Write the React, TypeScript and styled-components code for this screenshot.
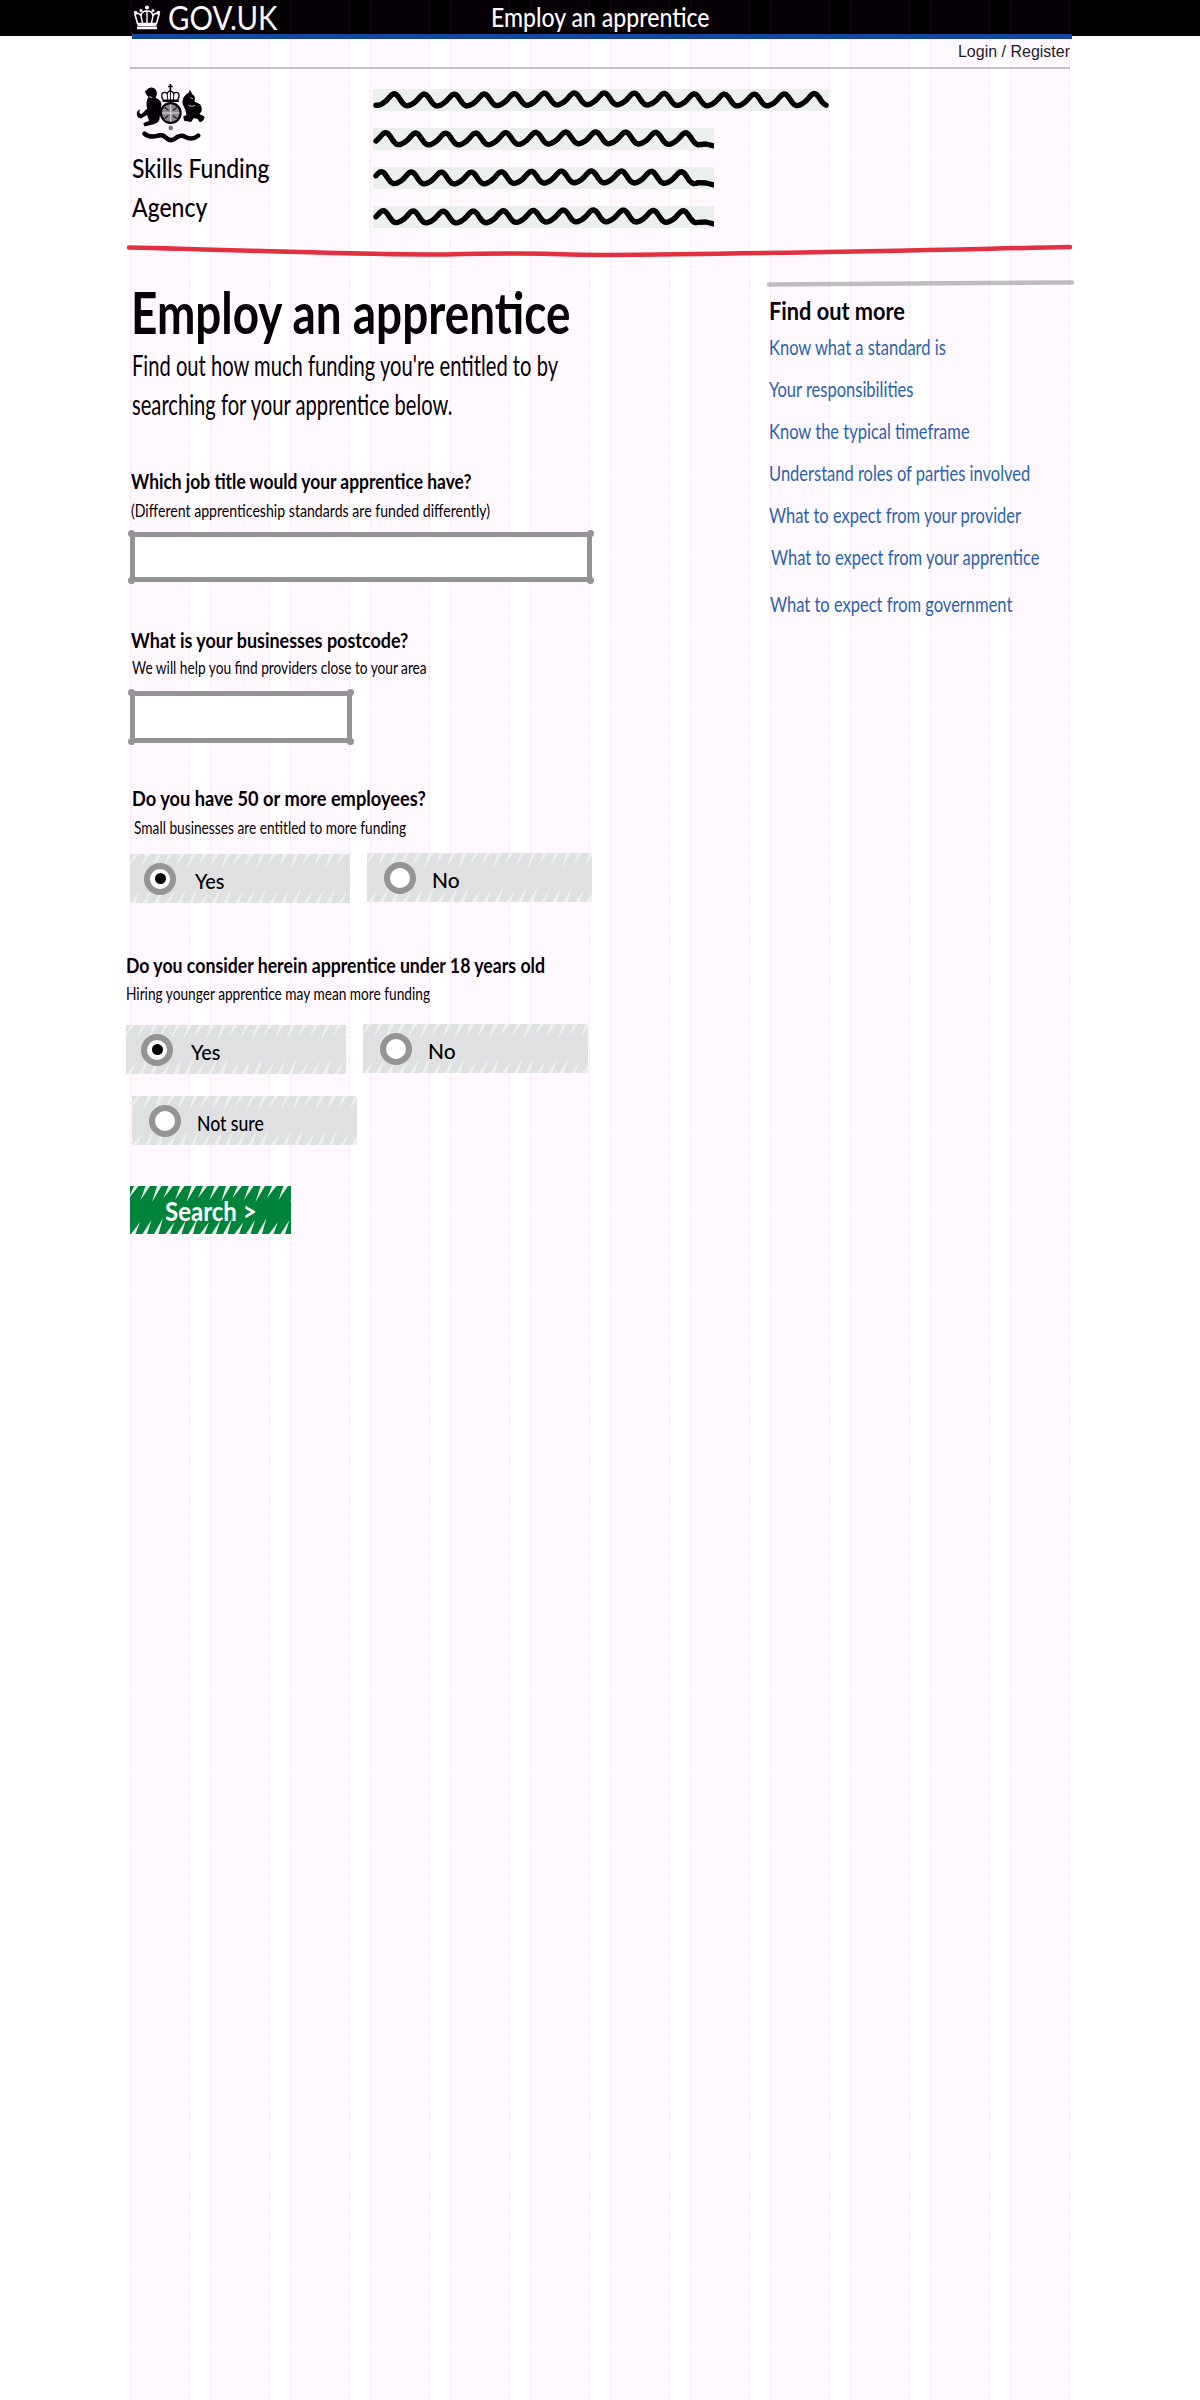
import React from 'react';
import styled, { createGlobalStyle, css } from 'styled-components';

const GlobalStyle = createGlobalStyle`
  html, body {
    margin: 0;
    background: #fff;
  }
  #root {
    position: relative;
    min-height: 2400px;
    font-family: Lato, "Open Sans", sans-serif;
    color: #000;
  }
`;

// the reference face is much narrower than anything installed
const squeeze = (k: number) => css`
  white-space: nowrap;
  transform: scaleX(${k});
  transform-origin: left center;
`;

const GridOverlay = styled.div`
  position: absolute;
  top: 0;
  left: 130px;
  width: 940px;
  height: 2400px;
  display: flex;
  gap: 20px;
  pointer-events: none;
`;

const GridColumn = styled.div`
  flex: 1;
  box-sizing: border-box;
  background: rgba(255, 0, 255, 0.028);
  border-left: 1px dashed rgba(255, 60, 120, 0.12);
  border-right: 1px dashed rgba(255, 60, 120, 0.12);
`;

const TopBar = styled.header`
  height: 39px;
  background: linear-gradient(#000 0 36px, transparent 36px);
  color: #fff;
`;

const TopInner = styled.div`
  box-sizing: border-box;
  width: 940px;
  height: 39px;
  margin-left: 132px;
  border-bottom: 5px solid #104a9a;
  display: flex;
  align-items: flex-start;
`;

const Brand = styled.div`
  width: 360px;
  height: 34px;
  padding-left: 1px;
  box-sizing: border-box;
  display: flex;
  align-items: center;
  gap: 7px;
`;

const BrandName = styled.span`
  font-size: 33px;
  line-height: 34px;
  ${squeeze(0.89)}
`;

const ServiceName = styled.div`
  margin-left: -1px;
  font-size: 26.5px;
  font-weight: 500;
  line-height: 34px;
  ${squeeze(0.87)}
`;

const Page = styled.div`
  width: 940px;
  margin-left: 130px;
`;

const LoginRow = styled.div`
  height: 28px;
  border-bottom: 2px solid #c4c4c6;
  text-align: right;
  font-family: "Liberation Sans", Arial, sans-serif;
  font-size: 16px;
  line-height: 26px;
  color: #1c1c1c;
`;

const OrgRow = styled.div`
  display: flex;
  height: 174px;
`;

const OrgBlock = styled.div`
  width: 243px;
  padding: 13px 0 0 2px;
  box-sizing: border-box;
`;

const CrestSvg = styled.svg`
  display: block;
  margin-left: 4px;
`;

const OrgName = styled.div`
  margin-top: 3px;
  font-size: 27px;
  font-weight: 500;
  line-height: 39px;
  ${squeeze(0.85)}
`;

const SquiggleList = styled.div`
  padding-top: 20px;
  display: flex;
  flex-direction: column;
  gap: 17px;
`;

const SquiggleSvg = styled.svg`
  position: relative;
  z-index: 1;
  display: block;
  background: #ebf0ef;
`;

const RuleSvg = styled.svg`
  display: block;
  margin-left: -4px;
`;

const MainRow = styled.div`
  display: flex;
`;

const LeftCol = styled.main`
  width: 637px;
  flex: none;
`;

const Heading = styled.h1`
  margin: 20px 0 0 1px;
  font-size: 57px;
  font-weight: 700;
  line-height: 66px;
  ${squeeze(0.805)}
`;

const Lead = styled.p`
  margin: 1px 0 0 2px;
  font-size: 28px;
  line-height: 39px;
  ${squeeze(0.72)}
`;

const Label = styled.div<{ $top: number; $left: number; $k: number }>`
  margin: ${p => p.$top}px 0 0 ${p => p.$left}px;
  font-size: 21.5px;
  font-weight: 700;
  line-height: 26px;
  ${p => squeeze(p.$k)}
`;

const Hint = styled.div<{ $top: number; $left: number; $k: number }>`
  margin: ${p => p.$top}px 0 0 ${p => p.$left}px;
  font-size: 17.5px;
  line-height: 23px;
  ${p => squeeze(p.$k)}
`;

const InputFrame = styled.div<{ $width: number; $height: number; $top: number }>`
  position: relative;
  z-index: 1;
  width: ${p => p.$width}px;
  height: ${p => p.$height}px;
  margin-top: ${p => p.$top}px;
`;

const TextInput = styled.input`
  display: block;
  box-sizing: border-box;
  width: 100%;
  height: 100%;
  padding: 0 8px;
  border: 5px solid #949494;
  border-radius: 0;
  background: #fff;
  outline: none;
`;

const Nub = styled.span<{ $right?: boolean; $bottom?: boolean }>`
  position: absolute;
  ${p => (p.$right ? 'right: -2px;' : 'left: -2px;')}
  ${p => (p.$bottom ? 'bottom: -2px;' : 'top: -2px;')}
  width: 7px;
  height: 7px;
  border-radius: 50%;
  background: #949494;
`;

const OptionRow = styled.div<{ $top: number; $left: number }>`
  display: flex;
  align-items: flex-start;
  gap: 17px;
  margin: ${p => p.$top}px 0 0 ${p => p.$left}px;
`;

const Option = styled.label<{ $width: number; $pad: number; $gap: number; $lift: number }>`
  position: relative;
  z-index: 1;
  box-sizing: border-box;
  display: flex;
  align-items: center;
  gap: ${p => p.$gap}px;
  width: ${p => p.$width}px;
  height: 49px;
  margin-top: ${p => p.$lift}px;
  padding-left: ${p => p.$pad}px;
  font-size: 22px;
  font-weight: 500;
`;

const HatchSvg = styled.svg`
  position: absolute;
  top: 0;
  left: 0;
`;

const Radio = styled.span<{ $on: boolean }>`
  position: relative;
  box-sizing: border-box;
  display: flex;
  align-items: center;
  justify-content: center;
  width: 32px;
  height: 32px;
  border: 6px solid #949494;
  border-radius: 50%;
  background: #fff;

  &::after {
    content: '';
    display: ${p => (p.$on ? 'block' : 'none')};
    width: 11px;
    height: 11px;
    border-radius: 50%;
    background: #000;
  }
`;

const OptionText = styled.span<{ $k: number }>`
  position: relative;
  padding-top: 4px;
  ${p => squeeze(p.$k)}
`;

const SearchButton = styled.button`
  position: relative;
  z-index: 1;
  display: block;
  width: 161px;
  height: 48px;
  margin-top: 41px;
  padding: 0 0 0 35px;
  border: 0;
  background: none;
  text-align: left;
  color: #fff;
  font-family: Lato, sans-serif;
  font-size: 27px;
  font-weight: 700;
`;

const SearchText = styled.span`
  position: relative;
  display: inline-block;
  ${squeeze(0.89)}
`;

const Sidebar = styled.aside`
  width: 307px;
  flex: none;
`;

const SideRule = styled.svg`
  display: block;
  margin-top: 20px;
`;

const SideTitle = styled.h2`
  margin: 8px 0 1px 2px;
  font-size: 25px;
  font-weight: 700;
  line-height: 30px;
  ${squeeze(0.87)}
`;

const LinkList = styled.ul`
  margin: 0;
  padding: 0;
  list-style: none;
`;

const LinkItem = styled.li<{ $left: number; $top: number }>`
  margin: ${p => p.$top}px 0 0 ${p => p.$left}px;
`;

const SideLink = styled.a`
  display: block;
  color: #1f66ab;
  font-size: 22px;
  line-height: 42px;
  text-decoration: none;
  ${squeeze(0.75)}
`;

const wavePath = (width: number, phase: number, tail: boolean) => {
  const points: string[] = [];
  for (let x = 3; x <= width - (tail ? 16 : 3); x += 2) {
    const t = (x / 30) * Math.PI * 2 + phase;
    const y = 11 + 5.8 * Math.sin(t) + 0.9 * Math.sin(2 * t + 0.8) + 0.6 * Math.sin(x / 47);
    points.push(`${x},${y.toFixed(1)}`);
  }
  if (tail) points.push(`${width - 8},16`, `${width},18`);
  return `M${points.join(' L')}`;
};

const Squiggle = ({ width, phase, tail }: { width: number; phase: number; tail: boolean }) => (
  <SquiggleSvg width={width} height={22} viewBox={`0 0 ${width} 22`}>
    <path d={wavePath(width, phase, tail)} fill="none" stroke="#000" strokeWidth={5.4} strokeLinecap="round" strokeLinejoin="round" />
  </SquiggleSvg>
);

// scribbled fill: solid colour with little tapered gaps cut in from top and bottom
const Hatch = ({ width, height, fill, gap }: { width: number; height: number; fill: string; gap: string }) => {
  const teeth: string[] = [];
  for (let x = 4, i = 0; x < width + 10; x += 11.5, i++) {
    const d = 12 + (i % 3) * 2;
    teeth.push(`M${x} 0 L${x + 4.500} 0 L${x - 5} ${d} Z`);
    teeth.push(`M${x - 3} ${height} L${x + 1.500} ${height} L${x + 6} ${height - d} Z`);
  }
  return (
    <HatchSvg width={width} height={height} viewBox={`0 0 ${width} ${height}`}>
      <rect width={width} height={height} fill={fill} />
      <path d={teeth.join(' ')} fill={gap} />
    </HatchSvg>
  );
};

const CrownIcon = () => (
  <svg width="28" height="27" viewBox="0 0 28 27" fill="none" stroke="#fff">
    <path d="M4 24h20M4.5 21h19" strokeWidth="2.4" />
    <path d="M4.5 19.5 2 10.5c2.5-2 5-1 6 1.5 .2-3 1.8-5 6-5s5.800 2 6 5c1-2.500 3.500-3.500 6-1.500L23.500 19.500Z" strokeWidth="1.600" />
    <path d="M8 12l1.500 7M14 7v12M20 12l-1.500 7" strokeWidth="1.400" />
    <circle cx="14" cy="3.500" r="2" fill="#fff" stroke="none" />
    <circle cx="2.500" cy="8.500" r="1.700" fill="#fff" stroke="none" />
    <circle cx="25.500" cy="8.500" r="1.700" fill="#fff" stroke="none" />
    <circle cx="8" cy="6.500" r="1.500" fill="#fff" stroke="none" />
    <circle cx="20" cy="6.500" r="1.500" fill="#fff" stroke="none" />
  </svg>
);

// royal arms, drawn roughly at crop scale
const Crest = () => (
  <CrestSvg width="73" height="63" viewBox="30 36 225 195">
    <path d="M62 62c6-12 24-12 30 0 4 8 2 16-2 22 8 6 20 10 18 24l-6 44c-2 10-14 14-24 16l-22 6-4-10 18-8-6-18-18 10c-8 2-14-6-14-14 0-6 4-12 10-14-4 8-2 16 6 14l16-16c-4-12-2-26 4-36-6-6-12-14-10-20z" fill="#000" />
    <path d="M62 118c-6 6-12 8-16 4M70 82l10 2" stroke="#fff" strokeWidth="2.500" fill="none" />
    <path d="M186 42l18 32c8 4 10 14 6 22l16 8c8 6 8 16 6 24l-6 6c4 6 12 4 16 10-2 10-8 16-16 16l-6-10-12-2-8 12-22-4-2-14 10-4-4-16-8-18c-2-14 4-28 18-34l4-10z" fill="#000" />
    <path d="M192 108c6 4 14 4 20 0M198 84l8 4" stroke="#fff" strokeWidth="2.500" fill="none" />
    <path d="M56 196c14 12 28 10 42 6 10-4 18 0 24 6 10 10 20 10 30 2 8-8 20-10 30-4 16 8 28 6 40-4" fill="none" stroke="#000" strokeWidth="14" strokeLinecap="round" />
    <circle cx="137" cy="132" r="34" fill="#000" />
    <circle cx="137" cy="132" r="27" fill="#8c8c8c" />
    <path d="M137 105v54M110 132h54" stroke="#e8e8e8" strokeWidth="3" />
    <path d="M118 114l12 10M156 114l-12 10M118 150l12-10M156 150l-12-10" stroke="#222" strokeWidth="4" />
    <path d="M114 92c-8-10-6-24 4-24 4 0 6 2 8 4 2-6 6-8 10-8s8 2 10 8c2-2 4-4 8-4 10 0 12 14 4 24z" fill="#fff" stroke="#000" strokeWidth="4" />
    <path d="M126 72l2 20M136 64v28M147 72l-2 20" stroke="#000" strokeWidth="3" />
    <path d="M136 42v22M129 50h14" stroke="#000" strokeWidth="5" />
    <path d="M112 92h50v6h-50z" fill="#000" />
    <circle cx="137" cy="178" r="7" fill="#777" />
  </CrestSvg>
);

type OptionData = { label: string; width: number; pad: number; gap: number; lift: number; k: number; on?: boolean };

const Choice = ({ label, width, pad, gap, lift, k, on = false }: OptionData) => (
  <Option $width={width} $pad={pad} $gap={gap} $lift={lift}>
    <Hatch width={width} height={49} fill="#dfe0e1" gap="#ebf1ed" />
    <Radio $on={on} />
    <OptionText $k={k}>{label}</OptionText>
  </Option>
);

const links = [
  { text: 'Know what a standard is', left: 2, top: 0 },
  { text: 'Your responsibilities', left: 2, top: 0 },
  { text: 'Know the typical timeframe', left: 2, top: 0 },
  { text: 'Understand roles of parties involved', left: 2, top: 0 },
  { text: 'What to expect from your provider', left: 2, top: 0 },
  { text: 'What to expect from your apprentice', left: 4, top: 0 },
  { text: 'What to expect from government', left: 3, top: 5 },
];

const App: React.FC = () => (
  <>
    <GlobalStyle />
    <TopBar>
      <TopInner>
        <Brand>
          <CrownIcon />
          <BrandName>GOV.UK</BrandName>
        </Brand>
        <ServiceName>Employ an apprentice</ServiceName>
      </TopInner>
    </TopBar>
    <Page>
      <LoginRow>Login / Register</LoginRow>
      <OrgRow>
        <OrgBlock>
          <Crest />
          <OrgName>
            Skills Funding
            <br />
            Agency
          </OrgName>
        </OrgBlock>
        <SquiggleList>
          <Squiggle width={456} phase={0.4} tail={false} />
          <Squiggle width={341} phase={2.2} tail />
          <Squiggle width={341} phase={3.1} tail />
          <Squiggle width={341} phase={2.7} tail />
        </SquiggleList>
      </OrgRow>
      <RuleSvg width="948" height="16" viewBox="0 0 948 16">
        <path d="M3 4.500 C120 7 230 12 320 11.500 C420 9 400 11 480 12 C640 11 800 7 944 4" fill="none" stroke="#e0323c" strokeWidth="4.500" strokeLinecap="round" />
      </RuleSvg>
      <MainRow>
        <LeftCol>
          <Heading>Employ an apprentice</Heading>
          <Lead>
            Find out how much funding you're entitled to by
            <br />
            searching for your apprentice below.
          </Lead>

          <Label $top={44} $left={1} $k={0.81}>Which job title would your apprentice have?</Label>
          <Hint $top={5} $left={1} $k={0.807}>(Different apprenticeship standards are funded differently)</Hint>
          <InputFrame $width={462} $height={50} $top={10}>
            <TextInput type="text" />
            <Nub /><Nub $right /><Nub $bottom /><Nub $right $bottom />
          </InputFrame>

          <Label $top={45} $left={1} $k={0.836}>What is your businesses postcode?</Label>
          <Hint $top={3} $left={2} $k={0.782}>We will help you find providers close to your area</Hint>
          <InputFrame $width={222} $height={52} $top={12}>
            <TextInput type="text" />
            <Nub /><Nub $right /><Nub $bottom /><Nub $right $bottom />
          </InputFrame>

          <Label $top={42} $left={2} $k={0.848}>Do you have 50 or more employees?</Label>
          <Hint $top={5} $left={4} $k={0.784}>Small businesses are entitled to more funding</Hint>
          <OptionRow $top={14} $left={0}>
            <Choice label="Yes" width={220} pad={14} gap={19} lift={1} k={0.9} on />
            <Choice label="No" width={225} pad={17} gap={16} lift={0} k={0.95} />
          </OptionRow>

          <Label $top={49} $left={-4} $k={0.823}>Do you consider herein apprentice under 18 years old</Label>
          <Hint $top={4} $left={-4} $k={0.782}>Hiring younger apprentice may mean more funding</Hint>
          <OptionRow $top={19} $left={-4}>
            <Choice label="Yes" width={220} pad={15} gap={18} lift={1} k={0.9} on />
            <Choice label="No" width={225} pad={17} gap={16} lift={0} k={0.95} />
          </OptionRow>
          <OptionRow $top={22} $left={2}>
            <Choice label="Not sure" width={225} pad={17} gap={16} lift={0} k={0.8} />
          </OptionRow>

          <SearchButton type="button">
            <Hatch width={161} height={48} fill="#00843c" gap="#eef3ee" />
            <SearchText>Search &gt;</SearchText>
          </SearchButton>
        </LeftCol>
        <Sidebar>
          <SideRule width="308" height="8" viewBox="0 0 308 8">
            <path d="M2 5.500 C100 5.500 200 5 305 3.500" fill="none" stroke="#bebfc0" strokeWidth="4.500" strokeLinecap="round" />
          </SideRule>
          <SideTitle>Find out more</SideTitle>
          <LinkList>
            {links.map(link => (
              <LinkItem key={link.text} $left={link.left} $top={link.top}>
                <SideLink href="#">{link.text}</SideLink>
              </LinkItem>
            ))}
          </LinkList>
        </Sidebar>
      </MainRow>
    </Page>
    <GridOverlay>
      {Array.from({ length: 12 }, (_, i) => (
        <GridColumn key={i} />
      ))}
    </GridOverlay>
  </>
);

export default App;
